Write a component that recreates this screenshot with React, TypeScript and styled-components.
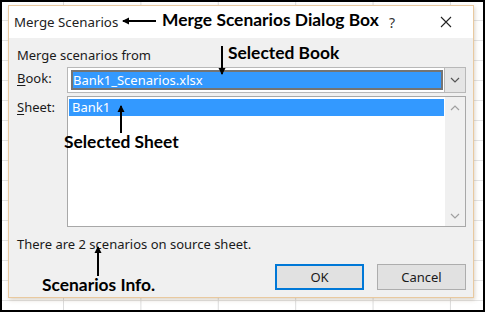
import React from "react";
import styled, { createGlobalStyle } from "styled-components";

const GlobalStyle = createGlobalStyle`
  html, body {
    margin: 0;
    padding: 0;
    background: #ffffff;
  }
`;

const uiFont = `"Noto Sans", "Open Sans", sans-serif`;
const noteFont = `Lato, "Open Sans", sans-serif`;

const Frame = styled.div`
  position: relative;
  width: 485px;
  height: 312px;
  box-sizing: border-box;
  padding: 5px 11px 0 8px;
  background-color: #ffffff;
  background-image: linear-gradient(to right, #dcdcdc 1px, transparent 1px),
    linear-gradient(to bottom, #e4e4e4 1px, transparent 1px);
  background-size: 77.4px 100%, 100% 20px;
  background-position: 63px 0, 0 0;
  box-shadow: inset 0 0 0 2px #000;
  overflow: hidden;
`;

const Dialog = styled.div`
  width: 466px;
  height: 293px;
  box-sizing: border-box;
  display: flex;
  flex-direction: column;
  border: 1px solid #e9c99f;
  box-shadow: 1px 2px 4px rgba(120, 90, 50, 0.25);
  font-family: ${uiFont};
  font-size: 13px;
  color: #1a1a1a;
`;

const TitleBar = styled.div`
  height: 32px;
  flex: none;
  display: flex;
  align-items: center;
  background: #ffffff;
  padding: 0 0 0 5px;
`;

const Title = styled.span`
  font-size: 13.3px;
  color: #222;
  flex: 1;
`;

const HelpMark = styled.span`
  font-size: 14px;
  color: #333;
  width: 51px;
`;

const CloseMark = styled.svg`
  width: 12px;
  height: 12px;
  margin-right: 21px;
`;

const Body = styled.div`
  flex: 1;
  background: #f0f0f0;
  padding: 9px 7px 0 8px;
  display: flex;
  flex-direction: column;
`;

const Heading = styled.div`
  height: 16px;
  line-height: 16px;
  margin-bottom: 4px;
`;

const FieldRow = styled.div`
  display: flex;
  align-items: flex-start;
  margin-bottom: 3px;
`;

const Label = styled.div`
  width: 50px;
  flex: none;
  line-height: 22px;
  u {
    text-decoration: underline;
    text-underline-offset: 2px;
  }
`;

const Combo = styled.div`
  flex: 1;
  height: 26px;
  box-sizing: border-box;
  display: flex;
  border: 1px solid #b8b8b8;
  background: #ffffff;
`;

const ComboValue = styled.div`
  flex: 1;
  margin: 2px 1px 2px 3px;
  background: #3399ff;
  border: 2px solid #747474;
  color: #ffffff;
  line-height: 16px;
  display: flex;
  align-items: center;
`;

const DropButton = styled.div`
  width: 20px;
  flex: none;
  background: #e5e5e5;
  border-left: 1px solid #b8b8b8;
  display: flex;
  align-items: center;
  justify-content: center;
`;

const ListBox = styled.div`
  flex: 1;
  height: 131px;
  box-sizing: border-box;
  display: flex;
  border: 1px solid #a8a8a8;
  background: #ffffff;
`;

const ListItems = styled.div`
  flex: 1;
  padding: 2px 1px 0 1px;
`;

const ListItem = styled.div<{ $selected?: boolean }>`
  height: 17px;
  line-height: 17px;
  padding-left: 3px;
  background: ${(p) => (p.$selected ? "#3399ff" : "transparent")};
  color: ${(p) => (p.$selected ? "#ffffff" : "#1a1a1a")};
`;

const ScrollTrack = styled.div`
  width: 20px;
  flex: none;
  background: #f0f0f0;
  display: flex;
  flex-direction: column;
  justify-content: space-between;
  align-items: center;
  padding: 8px 0 7px;
`;

const Info = styled.div`
  margin-top: 6px;
  line-height: 16px;
`;

const ButtonRow = styled.div`
  display: flex;
  justify-content: flex-end;
  gap: 13px;
  margin-top: 12px;
`;

const Button = styled.div<{ $primary?: boolean }>`
  width: 89px;
  height: 26px;
  box-sizing: border-box;
  display: flex;
  align-items: center;
  justify-content: center;
  background: #e1e1e1;
  border: ${(p) => (p.$primary ? "2px solid #0078d7" : "1px solid #adadad")};
  font-size: 13px;
`;

const Note = styled.div<{ $x: number; $y: number }>`
  position: absolute;
  left: ${(p) => p.$x}px;
  top: ${(p) => p.$y}px;
  font-family: ${noteFont};
  font-weight: 700;
  font-size: 17.4px;
  line-height: 18px;
  color: #000;
  white-space: nowrap;
`;

const ArrowSvg = styled.svg`
  position: absolute;
  left: 0;
  top: 0;
  pointer-events: none;
`;

const Chevron: React.FC<{ up?: boolean; color?: string }> = ({ up, color = "#555" }) => (
  <svg width="10" height="6" viewBox="0 0 10 6">
    <path
      d={up ? "M1 5 L5 1 L9 5" : "M1 1 L5 5 L9 1"}
      fill="none"
      stroke={color}
      strokeWidth="1.2"
    />
  </svg>
);

const arrows = [
  { x1: 156, y1: 21, x2: 123, y2: 21 },
  { x1: 222, y1: 46, x2: 222, y2: 74 },
  { x1: 121, y1: 133, x2: 121, y2: 106 },
  { x1: 98, y1: 276, x2: 98, y2: 247 },
];

export default function App() {
  return (
    <>
      <GlobalStyle />
      <Frame>
        <Dialog>
          <TitleBar>
            <Title>Merge Scenarios</Title>
            <HelpMark>?</HelpMark>
            <CloseMark viewBox="0 0 12 12">
              <path d="M1 1 L11 11 M11 1 L1 11" stroke="#222" strokeWidth="1.1" />
            </CloseMark>
          </TitleBar>
          <Body>
            <Heading>Merge scenarios from</Heading>
            <FieldRow>
              <Label>
                <u>B</u>ook:
              </Label>
              <Combo>
                <ComboValue>Bank1_Scenarios.xlsx</ComboValue>
                <DropButton>
                  <Chevron />
                </DropButton>
              </Combo>
            </FieldRow>
            <FieldRow>
              <Label>
                <u>S</u>heet:
              </Label>
              <ListBox>
                <ListItems>
                  <ListItem $selected>Bank1</ListItem>
                </ListItems>
                <ScrollTrack>
                  <Chevron up color="#a0a0a0" />
                  <Chevron color="#a0a0a0" />
                </ScrollTrack>
              </ListBox>
            </FieldRow>
            <Info>There are 2 scenarios on source sheet.</Info>
            <ButtonRow>
              <Button $primary>OK</Button>
              <Button>Cancel</Button>
            </ButtonRow>
          </Body>
        </Dialog>

        <Note $x={162} $y={11}>Merge Scenarios Dialog Box</Note>
        <Note $x={228} $y={44}>Selected Book</Note>
        <Note $x={64} $y={133}>Selected Sheet</Note>
        <Note $x={42} $y={276}>Scenarios Info.</Note>

        <ArrowSvg width="485" height="312" viewBox="0 0 485 312">
          <defs>
            <marker id="head" markerWidth="8" markerHeight="8" refX="6" refY="4" orient="auto" markerUnits="userSpaceOnUse">
              <path d="M0 0.5 L7 4 L0 7.5 Z" fill="#000" />
            </marker>
          </defs>
          {arrows.map((a, i) => (
            <line key={i} {...a} stroke="#000" strokeWidth="2" markerEnd="url(#head)" />
          ))}
        </ArrowSvg>
      </Frame>
    </>
  );
}
